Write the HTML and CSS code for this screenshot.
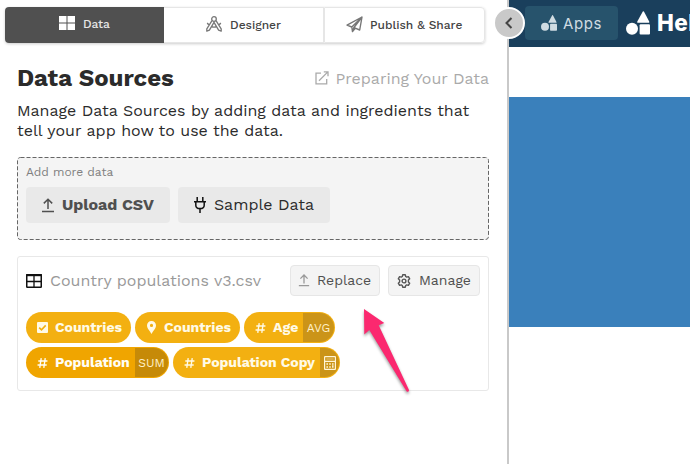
FILE: index.html
```html
<!DOCTYPE html>
<html lang="en">
<head>
<meta charset="utf-8">
<title>Data Sources</title>
<link rel="stylesheet" href="styles.css">
</head>
<body>
<svg class="defs" aria-hidden="true">
  <symbol id="upload" viewBox="0 0 14 16"><path d="M7 12V2.6M2.8 6.4 7 2.2l4.2 4.2M1 14.5h12" fill="none" stroke="currentColor" stroke-width="1.5"/></symbol>
  <symbol id="hash" viewBox="0 0 12 12"><path d="M4.6.7 3 11.3M9 .7 7.4 11.3M1.4 3.8h10M.6 8.2h10" fill="none" stroke="currentColor" stroke-width="1.5"/></symbol>
  <symbol id="shapes" viewBox="0 0 24 24"><path d="M16.8.5 11.3 10.6q-.4 1.2.8 1.2h10.3q1.2 0 .8-1.2L17.9.5q-.5-.7-1.1 0Z" fill="currentColor"/><circle cx="6" cy="17.8" r="6" fill="currentColor"/><rect x="13.6" y="13.2" width="10.4" height="10.3" rx="1" fill="currentColor"/></symbol>
</svg>
<div class="app">
  <aside class="panel">
    <nav class="tabs">
      <div class="tab active">
        <svg width="16" height="14" viewBox="0 0 16 14"><path d="M0 0h7.5v6.5H0zM8.5 0H16v6.5H8.5zM0 7.5h7.5V14H0zM8.5 7.5H16V14H8.5z" fill="#fff"/></svg>
        <span class="t-data">Data</span>
      </div>
      <div class="tab">
        <svg width="16" height="16" viewBox="0 0 16 16" fill="none" stroke="#777" stroke-width="1.3" stroke-linejoin="round"><path d="M6 4.6 .8 12.8v2.4l2.6-1L8 6.4l4.6 7.8 2.6 1v-2.4L10 4.6M5.3 10.6q2.7 1 5.4 0M1.2 7q.9 1.2 2 1.8M14.8 7q-.9 1.2-2 1.8"/><circle cx="8" cy="3" r="2.3"/></svg>
        <span class="t-designer">Designer</span>
      </div>
      <div class="tab">
        <svg width="17" height="17" viewBox="0 0 17 17" fill="none" stroke="#777" stroke-width="1.4" stroke-linejoin="round"><path d="m16 1-2.3 13-4.5-1.8L6.5 15.6 5.8 11 1 9.1ZM16 1 5.8 11M16 1 7.8 11.7l-1.3 3.9M7.8 11.7l1.6.6"/></svg>
        <span class="t-publish">Publish &amp; Share</span>
      </div>
    </nav>

    <header class="heading">
      <h1>Data Sources</h1>
      <a class="help">
        <svg width="14" height="14" viewBox="0 0 14 14" fill="none" stroke="currentColor" stroke-width="1.3"><path d="M6 2.2H1v10.6h10.7V8M4 9.8l8.6-8.7M8.8.9H13v4.3"/></svg>
        <span>Preparing Your Data</span>
      </a>
    </header>
    <p class="intro">Manage Data Sources by adding data and ingredients that<br>tell your app how to use the data.</p>

    <section class="add">
      <svg class="dashes"><rect x=".5" y=".5" width="471" height="82" rx="3"/></svg>
      <div class="add-label">Add more data</div>
      <div class="add-buttons">
        <button class="big upload"><svg width="14" height="16"><use href="#upload"/></svg><span>Upload CSV</span></button>
        <button class="big sample"><svg width="12" height="16" viewBox="0 0 12 16" fill="none" stroke="#111" stroke-width="1.5"><path d="M3.2 0v4M8.8 0v4M0 4.7h12M1.8 5v3.2q0 3.4 4.2 3.4t4.2-3.4V5M6 11.6V16"/></svg><span>Sample Data</span></button>
      </div>
    </section>

    <section class="card">
      <div class="source">
        <svg width="16" height="14" viewBox="0 0 16 14" fill="none" stroke="#111"><rect x=".75" y=".75" width="14.5" height="12.5" rx=".5" stroke-width="1.5"/><path d="M0 1.2h16" stroke-width="2"/><path d="M1 7.5h14M8 1v12" stroke-width="1.3"/></svg>
        <span class="file">Country populations v3.csv</span>
        <button class="small replace"><svg width="12" height="14"><use href="#upload"/></svg><span>Replace</span></button>
        <button class="small manage"><svg width="14" height="14" viewBox="0 0 14 14" fill="none" stroke="#555" stroke-width="1.4" stroke-linejoin="round"><path d="M5.7.8h2.6l.4 1.7 1 .6 1.7-.5 1.3 2.2L11.4 6v2l1.3 1.2-1.3 2.2-1.7-.5-1 .6-.4 1.7H5.7l-.4-1.7-1-.6-1.7.5-1.3-2.2L2.6 8V6L1.3 4.8l1.3-2.2 1.7.5 1-.6Z"/><circle cx="7" cy="7" r="1.9"/></svg><span>Manage</span></button>
      </div>
      <div class="chips">
        <div class="chip c1"><svg width="11" height="11" viewBox="0 0 11 11"><rect width="11" height="11" rx="1" fill="currentColor"/><path d="m2.2 5.6 2.3 2.2 4.2-4.4" fill="none" stroke="#f3b011" stroke-width="1.6"/></svg><span>Countries</span></div>
        <div class="chip c2"><svg width="9" height="13" viewBox="0 0 9 13"><path fill-rule="evenodd" d="M4.5 0A4.4 4.4 0 0 0 0 4.4C0 7.4 3 9.6 4.5 13 6 9.6 9 7.4 9 4.4A4.4 4.4 0 0 0 4.5 0Zm0 2.8a1.6 1.6 0 1 1 0 3.2 1.6 1.6 0 0 1 0-3.2Z" fill="currentColor"/></svg><span>Countries</span></div>
        <div class="chip c3"><svg width="11" height="12"><use href="#hash"/></svg><span>Age</span><b class="badge avg">AVG</b></div>
        <div class="chip c4"><svg width="11" height="12"><use href="#hash"/></svg><span>Population</span><b class="badge sum">SUM</b></div>
        <div class="chip c5"><svg width="11" height="12"><use href="#hash"/></svg><span>Population Copy</span><b class="badge calc"><svg width="12" height="14" viewBox="0 0 12 14" fill="none" stroke="#fff5d6"><rect x=".6" y=".6" width="10.8" height="12.8" rx=".5" stroke-width="1.2"/><path d="M1 5.4h10" stroke-width="1.2"/><path d="M2.3 3h7.4" opacity=".5"/><path d="M2.4 8h1.6m1.2 0h1.6m1.2 0h1.6M2.4 11h1.6m1.2 0h1.6m2-1.8v2.6" stroke-width="1.5"/></svg></b></div>
      </div>
    </section>
  </aside>

  <main class="preview">
    <div class="topbar">
      <div class="apps"><svg width="16" height="16"><use href="#shapes"/></svg><span>Apps</span></div>
      <div class="brand"><svg width="24" height="24"><use href="#shapes"/></svg><span>Hel</span></div>
    </div>
    <div class="hero"></div>
  </main>
  <div class="toggle"><svg width="8" height="12" viewBox="0 0 8 12"><path d="M6.5 1 1.5 6l5 5" fill="none" stroke="#444" stroke-width="2"/></svg></div>
  <svg class="pointer" width="52" height="92" viewBox="0 0 52 92"><path d="M4 4 24.3 18 18.7 20.3 49 85Q49.2 87.5 46.7 86.5L9.3 25 4.3 29.5Z" fill="#fb286f"/></svg>
</div>
</body>
</html>
```

FILE: styles.css
```css
* { box-sizing: border-box; }
body {
  margin: 0;
  background: #fff;
  color: #2b2b2b;
  font-family: "Work Sans", Inter, sans-serif;
}
svg { display: block; flex: none; }
.defs { position: absolute; width: 0; height: 0; }
span { white-space: nowrap; }
button { font: inherit; border: 0; padding: 0; }

.app { position: relative; display: flex; width: 690px; height: 464px; overflow: hidden; }
.panel { width: 509px; flex: none; border-right: 2px solid #c9c9c9; padding: 7px 0 0 5px; }

.tabs {
  display: grid;
  grid-template-columns: 159px 160px 161px;
  width: 480px;
  height: 36px;
  border-radius: 4px;
  box-shadow: 0 1px 3px rgba(0, 0, 0, .2);
}
.tab {
  display: flex;
  align-items: center;
  gap: 8px;
  padding-left: 42px;
  font-size: 12px;
  font-weight: 500;
  color: #444;
  border: 1px solid #e6e6e6;
  border-left: 0;
}
.tab svg { margin-top: -2px; }
.tab:last-child { border-left: 1px solid #e6e6e6; border-radius: 0 4px 4px 0; padding-left: 21px; gap: 7px; }
.tab.active { background: #505050; color: #e6e6e6; border: 0; border-radius: 4px 0 0 4px; padding: 0 0 2px 54px; }
.t-data { letter-spacing: -.1px; }

.heading { display: flex; align-items: center; justify-content: space-between; margin: 20px 18px 0 12px; height: 30px; }
h1 { margin: 0; font-size: 24px; line-height: 30px; }
.help { display: flex; align-items: center; gap: 7px; color: #aaa; font-size: 16px; }
.intro { margin: 8px 0 0 12px; font-size: 16px; line-height: 20px; }

.add { position: relative; width: 472px; height: 83px; margin: 16px 0 0 12px; padding: 8px 9px; background: #f4f4f4; border-radius: 3px; }
.dashes { position: absolute; inset: 0; width: 472px; height: 83px; fill: none; stroke: #666; stroke-dasharray: 4 2; }
.add-label { height: 14px; line-height: 15px; font-size: 12px; color: #808080; }
.add-buttons { display: flex; gap: 8px; margin-top: 8px; }
.big { display: flex; align-items: center; height: 36px; border-radius: 4px; background: #e9e9e9; font-size: 16px; }
.big span { margin-bottom: 2px; }
.upload { width: 144px; padding-left: 15px; gap: 7px; font-weight: 700; color: #505050; }
.sample { width: 152px; padding-left: 16px; gap: 8px; color: #2b2b2b; }

.card { width: 472px; height: 135px; margin: 16px 0 0 12px; padding: 8px; border: 1px solid #e8e8e8; border-radius: 3px; }
.source { display: flex; align-items: center; height: 31px; }
.file { width: 240px; padding-left: 8px; font-size: 16px; color: #999; }
.small { display: flex; align-items: center; height: 31px; flex: none; background: #f4f4f4; border: 1px solid #e6e6e6; border-radius: 4px; font-size: 14px; color: #505050; }
.small span { margin-bottom: 2px; }
.replace { width: 90px; margin-left: 8px; padding-left: 7px; gap: 7px; }
.replace svg { color: #999; margin-bottom: 2px; }
.manage { width: 92px; margin-left: 8px; padding-left: 8px; gap: 8px; }

.chips { display: flex; flex-wrap: wrap; gap: 4px; margin-top: 16px; }
.chip { display: flex; align-items: center; height: 31px; padding: 1px 1px 1px 11px; gap: 7px; background: #f3b011; color: #fffae6; border-radius: 16px; font-size: 14px; font-weight: 700; overflow: hidden; }
.chip span { margin: 0 -4px 2px 0; }
.c1 { width: 105px; }
.c2 { width: 105px; padding-left: 12px; gap: 8px; }
.c3 { width: 91px; }
.c4 { width: 143px; background: #f0a500; color: #fffdf6; }
.c5 { width: 167px; }
.badge { display: flex; flex: none; align-items: center; justify-content: center; height: 29px; margin-left: auto; border-radius: 0 15px 15px 0; background: #cb9418; font-size: 12px; font-weight: 400; color: #fff0c8; }
.avg { width: 31px; padding-top: 1px; }
.sum { width: 33px; padding-top: 1px; background: #c68a08; }
.calc { width: 19px; }

.preview { flex: 1; min-width: 0; }
.topbar { display: flex; align-items: center; height: 47px; padding-left: 16px; background: #1a3f5c; font-family: Inter, sans-serif; overflow: hidden; }
.apps { display: flex; align-items: center; gap: 6px; width: 93px; height: 34px; flex: none; margin-bottom: 1px; padding-left: 16px; border-radius: 4px; background: #27536c; color: #d0dce2; font-size: 15px; letter-spacing: .6px; }
.brand { display: flex; align-items: center; gap: 7px; margin: 0 0 2px 8px; color: #fff; font-size: 22.5px; font-weight: 800; letter-spacing: .5px; }
.hero { height: 230px; margin-top: 50px; background: #3a80bb; }

.toggle { position: absolute; left: 493px; top: 7px; display: flex; align-items: center; justify-content: center; width: 32px; height: 32px; border: 2px solid #fff; border-radius: 50%; background: #c9c9c9; }
.pointer { position: absolute; left: 360px; top: 305px; filter: drop-shadow(0 2px 1.5px rgba(0, 0, 0, .4)); }
```
